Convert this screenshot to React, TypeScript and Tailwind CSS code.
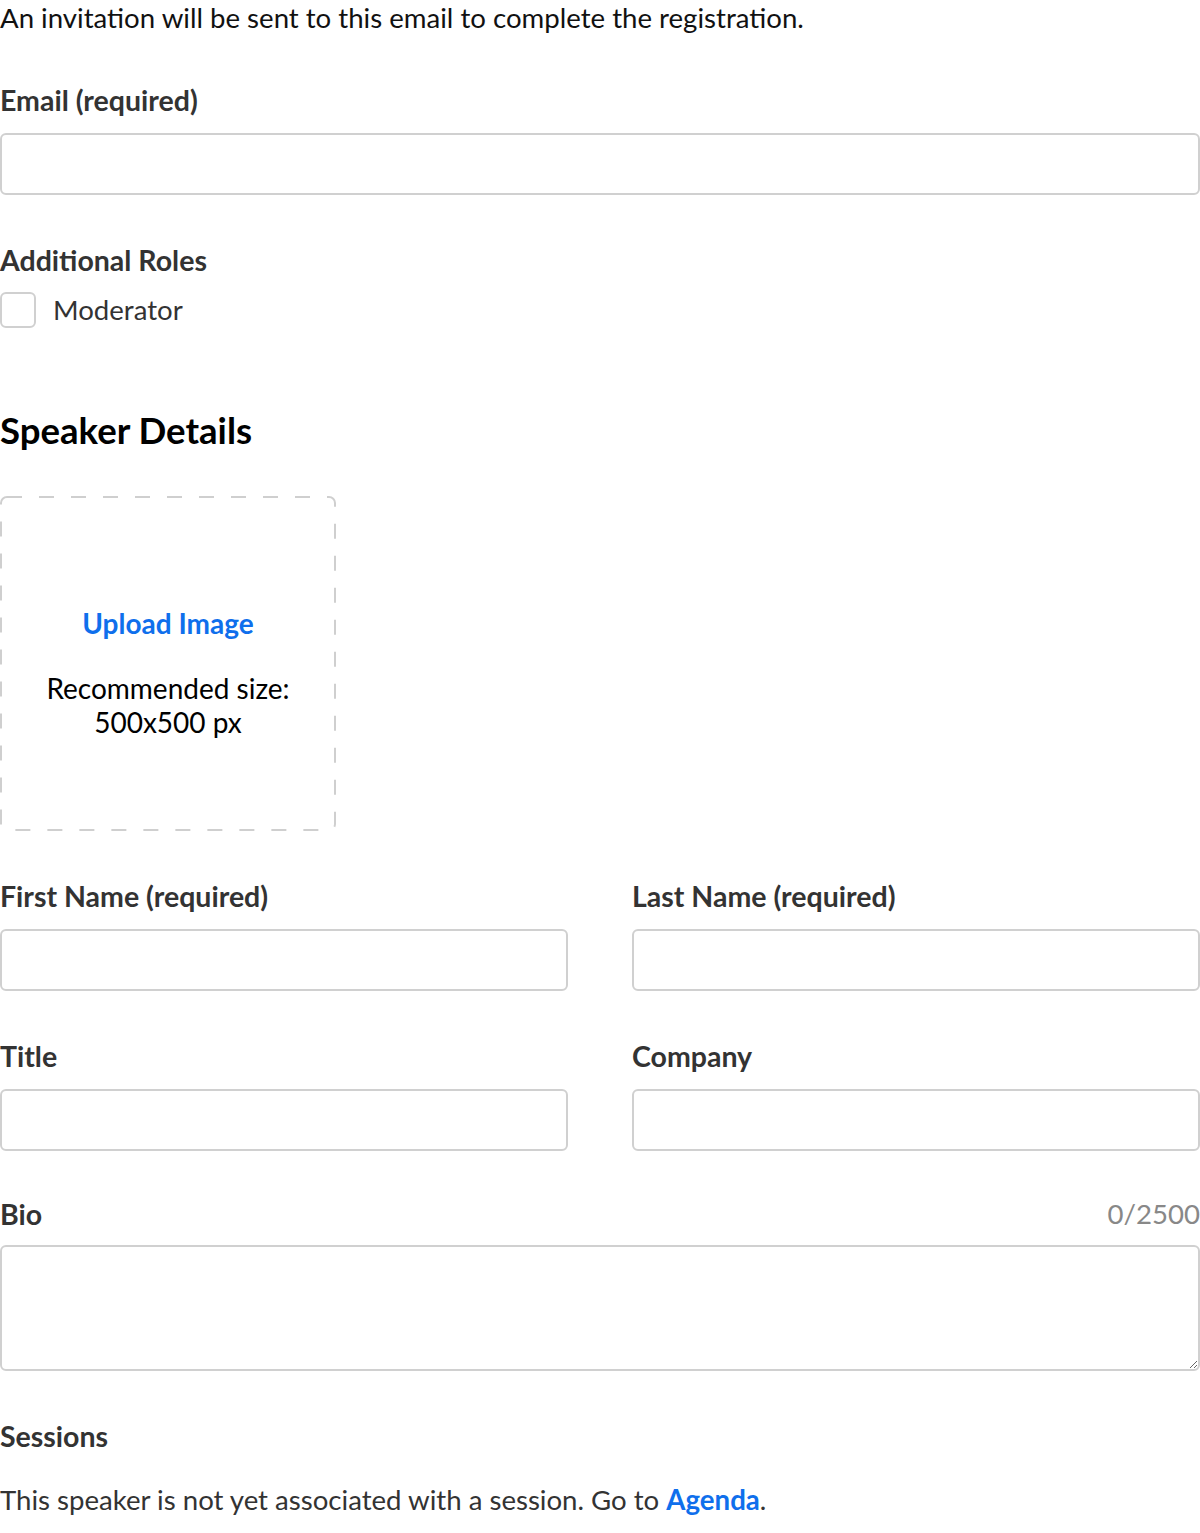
export default function App() {
  const label = "block text-[28.5px] leading-[36px] font-bold text-[#333]";
  const input =
    "block w-full h-[62px] rounded-[6px] border-2 border-[#d0d0d0] bg-white px-4 text-[28px] outline-none";

  return (
    <div
      className="w-[1200px] bg-white text-[#111] text-[27.6px] leading-[36px] min-h-[1533px]"
      style={{ fontFamily: "Lato, 'Liberation Sans', sans-serif" }}
    >
      <p>An invitation will be sent to this email to complete the registration.</p>

      <div className="mt-[46px]">
        <label className={label}>Email (required)</label>
        <input className={`${input} mt-[15px]`} />
      </div>

      <div className="mt-[47px]">
        <label className={label}>Additional Roles</label>
        <div className="mt-[14px] flex items-center gap-[17px] h-[36px]">
          <span className="w-[36px] h-[36px] rounded-[6px] border-2 border-[#d0d0d0] bg-white" />
          <span className="text-[#333]">Moderator</span>
        </div>
      </div>

      <h2 className="mt-[80px] text-[36.6px] leading-[44px] font-bold text-black">
        Speaker Details
      </h2>

      {/* image upload drop area */}
      <div className="relative mt-[44px] w-[336px] h-[335px] pt-[109px] flex flex-col items-center text-center">
        <svg className="absolute inset-0" width="336" height="335">
          <rect
            x="1"
            y="1"
            width="334"
            height="333"
            rx="6"
            fill="none"
            stroke="#cfcfcf"
            strokeWidth="2"
            strokeDasharray="15 17"
          />
        </svg>
        <span className="text-[#0f6fec] font-bold text-[28px]">Upload Image</span>
        <span className="mt-[30px] leading-[34px] text-black text-[28px]">
          Recommended size:
          <br />
          500x500 px
        </span>
      </div>

      <div className="mt-[47px] grid grid-cols-2 gap-x-[64px]">
        <div>
          <label className={label}>First Name (required)</label>
          <input className={`${input} mt-[15px]`} />
        </div>
        <div>
          <label className={label}>Last Name (required)</label>
          <input className={`${input} mt-[15px]`} />
        </div>
        <div className="mt-[47px]">
          <label className={label}>Title</label>
          <input className={`${input} mt-[15px]`} />
        </div>
        <div className="mt-[47px]">
          <label className={label}>Company</label>
          <input className={`${input} mt-[15px]`} />
        </div>
      </div>

      <div className="mt-[45px]">
        <div className="flex items-center justify-between">
          <label className={label}>Bio</label>
          <span className="text-[#888]">0/2500</span>
        </div>
        <textarea className="mt-[13px] block w-full h-[126px] rounded-[6px] border-2 border-[#d0d0d0] bg-white p-3 outline-none" />
      </div>

      <div className="mt-[47px]">
        <label className={label}>Sessions</label>
        <p className="mt-[28px] text-[#333]">
          This speaker is not yet associated with a session. Go to{" "}
          <a className="text-[#0f6fec] font-bold">Agenda</a>.
        </p>
      </div>
    </div>
  );
}
